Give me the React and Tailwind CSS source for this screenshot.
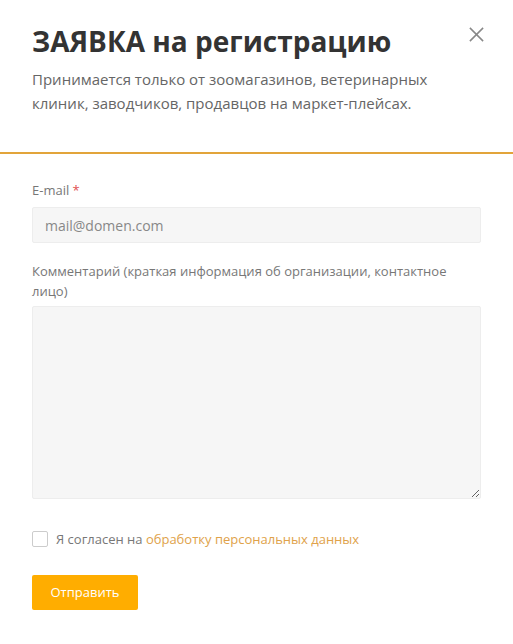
export default function App() {
  return (
    <main className="min-h-[644px] w-full bg-white font-['Open_Sans',sans-serif] text-[#333]">
      <header className="relative px-8 pb-[37px] pt-[21px]">
        <h1 className="text-[28px] font-bold leading-[40px] text-[#333]">ЗАЯВКА на регистрацию</h1>
        <p className="mt-[6px] text-[15px] leading-[24px] text-[#666]">
          Принимается только от зоомагазинов, ветеринарных
          <br />
          клиник, заводчиков, продавцов на маркет-плейсах.
        </p>
        <button type="button" className="absolute right-[28px] top-[26px] text-[#888]" aria-label="Закрыть">
          <svg className="size-[17px]" viewBox="0 0 18 18" fill="none" stroke="currentColor" strokeWidth="1.6">
            <path d="M2 2l14 14M16 2L2 16" />
          </svg>
        </button>
      </header>
      <div className="h-[2px] w-full bg-[#e2a43a]" />
      <form className="px-8 pt-[26px]">
        <label className="block text-[13px] leading-[20px] text-[#777]">
          E-mail <span className="text-[#e05050]">*</span>
        </label>
        <input
          type="text"
          placeholder="mail@domen.com"
          className="mt-[7px] h-[36px] w-[449px] rounded-[2px] border border-[#ededed] bg-[#f6f6f6] px-3 text-[14px] text-[#333] outline-none placeholder:text-[#888]"
        />
        <label className="mt-[18px] block w-[449px] text-[13px] leading-[20px] text-[#777]">
          Комментарий (краткая информация об организации, контактное лицо)
        </label>
        <textarea className="mt-[5px] block h-[193px] w-[449px] rounded-[2px] border border-[#ededed] bg-[#f6f6f6] outline-none" />
        <div className="mt-[30px] flex items-center gap-2">
          <span className="block size-[16px] rounded-[2px] border border-[#ccc] bg-white" />
          <span className="text-[13px] leading-[20px] text-[#777]">
            Я согласен на <a className="text-[#e0a24a]">обработку персональных данных</a>
          </span>
        </div>
        <button
          type="button"
          className="mt-[26px] h-[35px] w-[106px] rounded-[2px] bg-[#ffad00] text-[13px] text-white"
        >
          Отправить
        </button>
      </form>
    </main>
  );
}
